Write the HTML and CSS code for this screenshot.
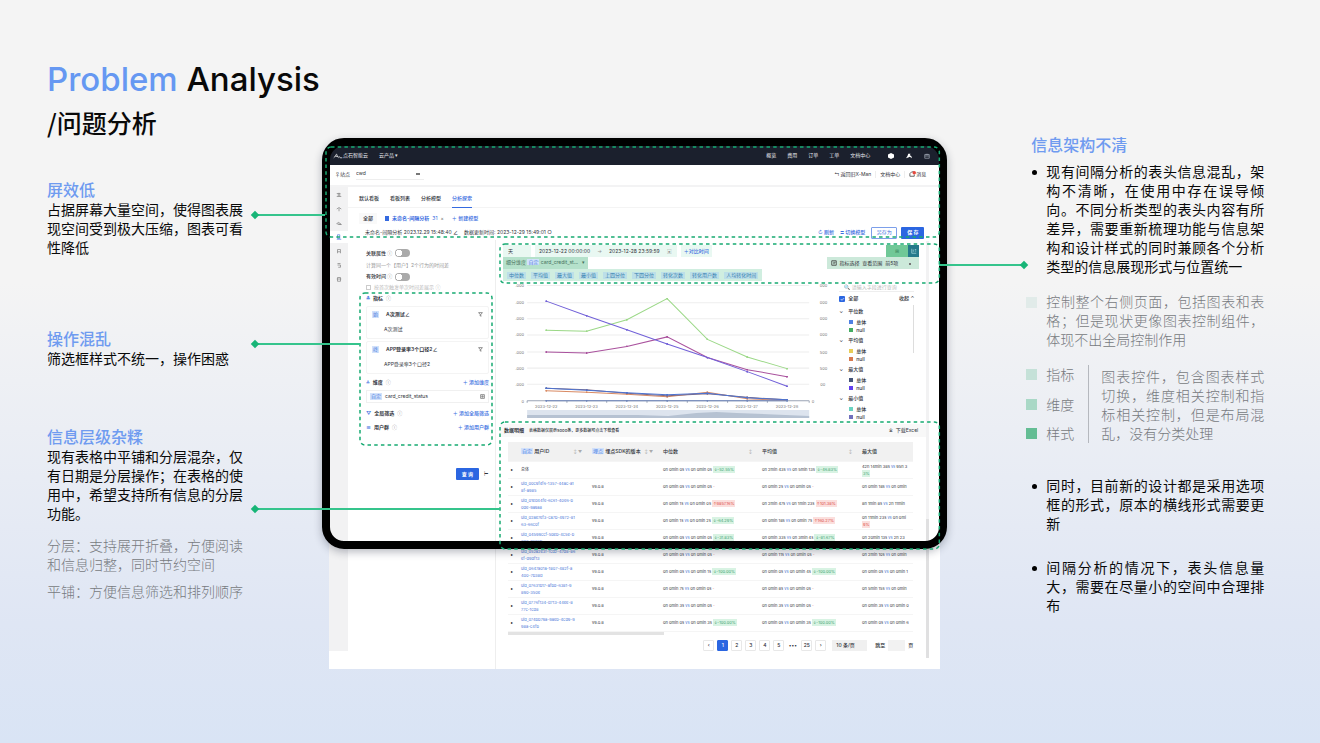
FILE: index.html
```html
<!DOCTYPE html>
<html lang="zh-CN">
<head>
<meta charset="utf-8">
<title>Problem Analysis / 问题分析</title>
<link rel="stylesheet" href="styles.css">
</head>
<body>
<main class="slide">
  <section class="notes notes-left">
    <h1 class="title"><span class="accent">Problem</span> Analysis</h1>
    <p class="subtitle">/问题分析</p>
    <article class="note note-first">
      <h2>屏效低</h2>
      <p>占据屏幕大量空间，使得图表展现空间受到极大压缩，图表可看性降低</p>
    </article>
    <article class="note note-second">
      <h2>操作混乱</h2>
      <p>筛选框样式不统一，操作困惑</p>
    </article>
    <article class="note note-third">
      <h2>信息层级杂糅</h2>
      <p>现有表格中平铺和分层混杂，仅有日期是分层操作；在表格的使用中，希望支持所有信息的分层功能。</p>
      <p class="muted">分层：支持展开折叠，方便阅读和信息归整，同时节约空间</p>
      <p class="muted">平铺：方便信息筛选和排列顺序</p>
    </article>
  </section>

  <section class="stage">
    <div class="screen">
      <header class="topbar">
        <svg class="logo" viewBox="0 0 14 8"><path d="M1 6.500C3 6 4 1 5 1.500S5 5 8 6.500M3.500 4.500h3M8 4l2 2.500h3" fill="none" stroke="#fff"/></svg>
        <span>点石智能云</span><span class="product">云产品 ▾</span>
        <nav class="topnav"><a href="#">概览</a><a href="#">费用</a><a href="#">订单</a><a href="#">工单</a><a href="#">文档中心</a></nav>
        <svg class="ico top-ico" viewBox="0 0 8 8"><path d="M4 0l4 2v4L4 8 0 6V2z" fill="#fff"/></svg>
        <svg class="ico top-ico" viewBox="0 0 8 8"><path d="M0 7l2-3 1-3h3l-1 2 2 1 1 3-3-2-2 1z" fill="#fff"/></svg>
        <svg class="ico top-ico" viewBox="0 0 8 8"><path d="M1 2h6v5H1zM1 4h6M3 1v2M5 1v2" fill="none" stroke="#9aa0ad"/></svg>
      </header>
      <div class="sitebar">
        <label for="site">♀站点</label>
        <select id="site" class="site-select"><option>cwd</option></select>
        <nav class="sitenav"><a href="#">↰ 返回旧X-Man</a><i></i><a href="#">文档中心</a><i></i><a href="#" class="message"><svg class="bell" viewBox="0 0 8 8"><path d="M1 6V3l2-2h3M1 6h5V4" fill="none" stroke="#555"/><circle cx="6" cy="2" r="2" fill="#e6483d"/></svg>消息</a></nav>
      </div>
      <div class="workspace">
        <aside class="rail">
          <svg viewBox="0 0 8 8"><path d="M1 2h5M2 4h4M1 6h6M4 1v5"/></svg>
          <svg viewBox="0 0 8 8"><path d="M1 4l3-2 3 2M4 3v4"/></svg>
          <svg viewBox="0 0 8 8"><path d="M1 5l2-2 2 1 2 2zM3 6h4"/></svg>
          <span class="rail-on"><svg viewBox="0 0 8 8"><path d="M2 1h3v5H2zM1 7h6"/></svg></span>
          <svg viewBox="0 0 8 8"><path d="M2 7V2h4v3H2M6 5v2"/></svg>
          <svg viewBox="0 0 8 8"><path d="M2 2h4M2 4h4v3H3"/></svg>
          <svg viewBox="0 0 8 8"><path d="M2 2h4v5H2zM1 4h6"/></svg>
        </aside>
        <div class="main">
          <nav class="tabs"><a href="#">默认看板</a><a href="#">看板列表</a><a href="#">分析模型</a><a href="#" class="on">分析探索</a></nav>
          <div class="models"><button class="all">全部</button><button class="current"><b class="square"></b><strong>未命名-间隔分析</strong> 31 <span>×</span></button><button class="link">＋ 新建模型</button></div>
          <div class="model-head">
            <span>未命名-间隔分析 2023.12.29 15:48:40 <b>∠</b></span><small>数据更新时间: 2023-12-29 15:49:01 ○</small>
            <div class="actions"><button class="link">↻ 刷新</button><button class="link">≒ 切换模型</button><button class="outline">另存为</button><button class="primary">保 存</button></div>
          </div>
          <div class="panes">
            <form class="filters">
              <div class="row r12"><label for="rel">关联属性 <span class="dim">ⓘ</span></label><input id="rel" class="toggle" type="checkbox"></div>
              <p class="row r12 dim">计算同一个【用户】2个行为的时间差</p>
              <div class="row r12"><label for="valid">有效时间 <span class="dim">ⓘ</span></label><input id="valid" class="toggle" type="checkbox"></div>
              <label class="row r12 disabled"><input class="mini-check" type="checkbox" checked disabled>按首次触发单次时间差展示 ⓘ</label>
              <div class="row r12"><b class="blue">≛</b><strong>指标</strong><span class="dim">ⓘ</span></div>
              <div class="metric">
                <div class="metric-row"><b class="tag">始</b><strong>A次测试∠</strong><svg class="funnel" viewBox="0 0 8 8"><path d="M1 1h6L4.500 4v3L3.500 6V4z"/></svg></div>
                <div class="metric-row sub">A次测试</div>
              </div>
              <div class="metric">
                <div class="metric-row"><b class="tag">终</b><strong>APP登录率3个口径2∠</strong><svg class="funnel" viewBox="0 0 8 8"><path d="M1 1h6L4.500 4v3L3.500 6V4z"/></svg></div>
                <div class="metric-row sub">APP登录率3个口径2</div>
              </div>
              <div class="row r16"><b class="blue">⁂</b><strong>维度</strong><span class="dim">ⓘ</span><button type="button" class="link push">＋ 添加维度</button></div>
              <div class="dimension"><b class="tag">自定</b>card_credit_status<svg class="funnel" viewBox="0 0 8 8"><path d="M1 1h6v6H1zM3 3h2v2H3z"/></svg></div>
              <div class="row r14 gap-top"><b class="blue">▽</b><strong>全局筛选</strong><span class="dim">ⓘ</span><button type="button" class="link push">＋ 添加全局筛选</button></div>
              <div class="row r14"><b class="blue">≡</b><strong>用户群</strong><span class="dim">ⓘ</span><button type="button" class="link push">＋ 添加用户群</button></div>
              <div class="query"><button type="button" class="primary">查 询</button><span>⊢</span></div>
            </form>

            <div class="results">
              <div class="result-body">
                <div class="controls">
                  <div class="time"><select class="unit" aria-label="单位"><option>天</option></select><div class="dates"><span>2023-12-22 00:00:00</span><i>→</i><span>2023-12-28 23:59:59</span><i>▣</i></div><button class="link">＋对比时间</button></div>
                  <div class="switch"><button>⊞</button><button class="on" aria-label="图表"><svg class="ico" viewBox="0 0 8 8"><path d="M1 1v6h6M3 2v3M5 2h2M5 4h2" fill="none" stroke="#9fd4da"/></svg></button></div>
                  <div class="split">细分维度 <b class="tag">自定</b> card_credit_st... <em>▾</em></div>
                  <div class="scope"><svg class="ico" viewBox="0 0 8 8"><path d="M1 1h6v6H1zM3 3h3M3 5h2" fill="none" stroke="#333"/></svg>指标选择&nbsp; 查看范围 <select aria-label="查看范围"><option>前5项</option></select></div>
                  <div class="chips"><b>中位数</b><b>平均值</b><b>最大值</b><b>最小值</b><b>上四分位</b><b>下四分位</b><b>转化次数</b><b>转化用户数</b><b>人均转化时间</b></div>
                </div>
                <div class="chart-row">
                  <svg class="chart" viewBox="0 0 320 137">
                    <path d="M19 3.500h280M19 20.500h280M19 36.500h280M19 52.500h280M19 69.500h280M19 85.500h280M19 101.500h280" stroke="#eee" fill="none"/>
                    <g class="axis">
                      <text x="16" y="5">.000</text><text x="16" y="22">.000</text><text x="16" y="38">.000</text><text x="16" y="54">.000</text><text x="16" y="71">.000</text><text x="16" y="87">.000</text><text x="16" y="103">.000</text><text x="16" y="120">0</text>
                      <text x="317" y="5">000</text><text x="317" y="22">000</text><text x="317" y="38">000</text><text x="317" y="54">000</text><text x="317" y="71">500</text><text x="317" y="87">500</text><text x="315" y="103">00</text><text x="304" y="120">0</text>
                    </g>
                    <path d="M19 118h280M19 118v2M58.500 118v2M98 118v2M138 118v2M178 118v2M218 118v2M257.500 118v2M299 118v2" stroke="#9aa4b5" fill="none"/>
                    <g class="axis dates-axis"><text x="38" y="125">2023-12-22</text><text x="78" y="125">2023-12-23</text><text x="118" y="125">2023-12-24</text><text x="158" y="125">2023-12-25</text><text x="198" y="125">2023-12-26</text><text x="237" y="125">2023-12-27</text><text x="277" y="125">2023-12-28</text></g>
                    <path d="M19 127h280v8H19z" fill="#dde4ee"/><path d="M19 132h110l30 1 28-3 20-1 20 1 72 3v2H19z" fill="#b6c2d2"/>
                    <g class="series">
                      <polyline points="38,48 78,49 118,37.500 158,16.500 198,57 237.500,74.500 277,86" stroke="#9bd887"/>
                      <polyline points="38,69.500 78,70.500 118,64 158,54.500 198,75 237.500,87 277,94" stroke="#a9519d"/>
                      <polyline points="38,19 78,33.500 118,47.500 158,61.500 198,75 237.500,89 277,103.500" stroke="#7160d8"/>
                      <polyline points="38,108 78,109.500 118,111.500 158,114 198,109.500 237.500,116 277,117.500" stroke="#d98b64"/>
                      <polyline points="38,105.500 78,107 118,110.500 158,113 198,111 237.500,114.500 277,117" stroke="#806a80"/>
                      <polyline points="38,105.500 78,107.500 118,110 158,112 198,110.500 237.500,115 277,117" stroke="#4d73d0"/>
                      <polyline points="38,118 78,118 118,118 158,118 198,118 237.500,118 277,118" stroke="#6f86bb"/>
                    </g>
                    <defs><marker id="dot" viewBox="0 0 4 4" refX="2" refY="2" markerWidth="2" markerHeight="2"><circle cx="2" cy="2" r="2" fill="context-stroke"/></marker></defs>
                  </svg>
                  <div class="legend">
                    <input class="search" type="text" aria-label="搜索" placeholder="🔍 请输入字段进行查询">
                    <div class="legend-all"><label><input type="checkbox" checked> 全部</label><span>收起 ⌃</span></div>
                    <div class="legend-scroll">
                      <p class="group">平位数</p><p class="item"><i class="c1"></i>总体</p><p class="item"><i class="c2"></i>null</p>
                      <p class="group">平均值</p><p class="item"><i class="c3"></i>总体</p><p class="item"><i class="c4"></i>null</p>
                      <p class="group">最大值</p><p class="item"><i class="c5"></i>总体</p><p class="item"><i class="c6"></i>null</p>
                      <p class="group">最小值</p><p class="item"><i class="c7"></i>总体</p><p class="item"><i class="c8"></i>null</p>
                    </div>
                  </div>
                </div>
                <div class="table-head"><strong>数据明细</strong><span>表格数据仅展示5000条，更多数据可点击下载查看</span><button class="download">⤓ &nbsp;下载Excel</button></div>
                <div class="table-wrap">
                  <table>
                    <colgroup><col class="w-arrow"><col class="w-id"><col class="w-ver"><col class="w-mid"><col class="w-avg"><col></colgroup>
                    <thead><tr><th></th><th><b class="tag">自定</b> 用户ID<i class="sort">↕ ▼</i></th><th><b class="tag">埋点</b> 埋点SDK的版本<i class="sort">↕ ▼</i></th><th>中位数<i class="sort">↕</i></th><th>平均值<i class="sort">↕</i></th><th>最大值</th></tr></thead>
                    <tbody>
                      <tr><td>▸</td><td>总体</td><td></td><td>0h 0min 0s <u>vs</u> 0h 0min 0s <ins>↓-52.55%</ins></td><td>0h 2min 43s <u>vs</u> 0h 5min 13s <ins>↓-46.83%</ins></td><td>42h 14min 38s <u>vs</u> 95h 3<br><ins>3%</ins></td></tr>
                      <tr><td>▸</td><td><a href="#">uid_00c9f4f6-1357-44ac-a1<br>8f-a985</a></td><td>v9.0.8</td><td>0h 0min 0s <u>vs</u> 0h 0min 0s <em>-</em></td><td>0h 0min 2s <u>vs</u> 0h 0min 0s <em>-</em></td><td>0h 0min 18s <u>vs</u> 0h 0min</td></tr>
                      <tr><td>▸</td><td><a href="#">uid_01ed44fe-6c61-40e6-b<br>0de-9a9a8</a></td><td>v9.0.8</td><td>0h 0min 1s <u>vs</u> 0h 0min 0s <del>↑9857.16%</del></td><td>0h 2min 47s <u>vs</u> 0h 1min 23s <del>↑101.38%</del></td><td>8h 1min 8s <u>vs</u> 2h 11min</td></tr>
                      <tr><td>▸</td><td><a href="#">uid_02ae7ef3-ca7b-4972-81<br>63-66c0f</a></td><td>v9.0.8</td><td>0h 0min 1s <u>vs</u> 0h 0min 2s <ins>↓-64.29%</ins></td><td>0h 0min 18s <u>vs</u> 0h 0min 7s <del>↑160.27%</del></td><td>0h 11min 23s <u>vs</u> 0h 0mi<br><del>9%</del></td></tr>
                      <tr><td>▸</td><td><a href="#">uid_04599ccf-5beb-4c5e-b<br>303-2c26b</a></td><td>v9.0.8</td><td>0h 0min 0s <u>vs</u> 0h 0min 0s <ins>↓-31.83%</ins></td><td>0h 0min 33s <u>vs</u> 0h 3min 4s <ins>↓-81.67%</ins></td><td>0h 20min 13s <u>vs</u> 2h 23</td></tr>
                      <tr><td>▸</td><td><a href="#">uid_052a2e3f-fcd2-47d8-86<br>ef-d9df13</a></td><td>v9.0.8</td><td>0h 0min 0s <u>vs</u> 0h 0min 0s <em>-</em></td><td>0h 0min 11s <u>vs</u> 0h 0min 0s <em>-</em></td><td>0h 2min 10s <u>vs</u> 0h 0min</td></tr>
                      <tr><td>▸</td><td><a href="#">uid_0647a01a-1807-482f-a<br>400-7b38d</a></td><td>v9.0.8</td><td>0h 0min 0s <u>vs</u> 0h 0min 1s <ins>↓-100.00%</ins></td><td>0h 0min 0s <u>vs</u> 0h 0min 4s <ins>↓-100.00%</ins></td><td>0h 0min 0s <u>vs</u> 0h 0min 1</td></tr>
                      <tr><td>▸</td><td><a href="#">uid_07631b17-afbd-6381-9<br>890-350e</a></td><td>v9.0.8</td><td>0h 0min 7s <u>vs</u> 0h 0min 0s <em>-</em></td><td>0h 0min 8s <u>vs</u> 0h 0min 0s <em>-</em></td><td>0h 5min 15s <u>vs</u> 0h 0min</td></tr>
                      <tr><td>▸</td><td><a href="#">uid_0776f134-d713-44ee-8<br>77c-1cd8</a></td><td>v9.0.8</td><td>0h 0min 3s <u>vs</u> 0h 0min 0s <em>-</em></td><td>0h 0min 3s <u>vs</u> 0h 0min 0s <em>-</em></td><td>0h 0min 3s <u>vs</u> 0h 0min 0</td></tr>
                      <tr><td>▸</td><td><a href="#">uid_074bb79a-9aeb-4cd9-9<br>98a-c4fb</a></td><td>v9.0.8</td><td>0h 0min 0s <u>vs</u> 0h 0min 3s <ins>↓-100.00%</ins></td><td>0h 0min 0s <u>vs</u> 0h 0min 3s <ins>↓-100.00%</ins></td><td>0h 0min 0s <u>vs</u> 0h 0min 6</td></tr>
                    </tbody>
                  </table>
                  <div class="hscroll"></div>
                </div>
                <nav class="pager"><button>‹</button><button class="on">1</button><button>2</button><button>3</button><button>4</button><button>5</button><span>•••</span><button>25</button><button>›</button><select aria-label="每页条数"><option>10 条/页</option></select><label for="jump">跳至</label><input id="jump" type="text"><span class="unit-page">页</span></nav>
              </div>
              <div class="vscroll"></div>
            </div>
          </div>
        </div>
      </div>
    </div>
    <div class="bezel"></div>
    <svg class="zone zone-top"><rect width="100%" height="100%" rx="5"/></svg>
    <svg class="zone zone-controls"><rect width="100%" height="100%" rx="5"/></svg>
    <svg class="zone zone-filters"><rect width="100%" height="100%" rx="5"/></svg>
    <svg class="zone zone-table"><rect width="100%" height="100%" rx="5"/></svg>
    <div class="pin pin-top"></div>
    <div class="pin pin-filters"></div>
    <div class="pin pin-table"></div>
    <div class="pin pin-right"></div>
  </section>

  <section class="notes notes-right">
    <h2>信息架构不清</h2>
    <ul><li>现有间隔分析的表头信息混乱，架构不清晰，在使用中存在误导倾向。不同分析类型的表头内容有所差异，需要重新梳理功能与信息架构和设计样式的同时兼顾各个分析类型的信息展现形式与位置统一</li></ul>
    <div class="keyed"><i class="swatch s1"></i><p>控制整个右侧页面，包括图表和表格；但是现状更像图表控制组件，体现不出全局控制作用</p></div>
    <div class="keys">
      <dl><dt class="swatch s2"></dt><dd>指标</dd><dt class="swatch s3"></dt><dd>维度</dd><dt class="swatch s4"></dt><dd>样式</dd></dl>
      <p>图表控件，包含图表样式切换，维度相关控制和指标相关控制，但是布局混乱，没有分类处理</p>
    </div>
    <ul class="extra"><li>同时，目前新的设计都是采用选项框的形式，原本的横线形式需要更新</li><li>间隔分析的情况下，表头信息量大，需要在尽量小的空间中合理排布</li></ul>
  </section>
</main>
</body>
</html>
```
FILE: styles.css
```css
* { box-sizing: border-box; }
body { margin: 0; font-family: "Noto Sans CJK SC", "Noto Sans", sans-serif; color: #090909; }
h1, h2, p, ul, dl, dd { margin: 0; padding: 0; }
a { color: inherit; text-decoration: none; }
button, input, select { font: inherit; color: inherit; margin: 0; padding: 0; border: 0; background: none; appearance: none; }
i, em { font-style: normal; }

.slide { min-height: 100vh; display: grid; grid-template-columns: 196px 1fr 238px; column-gap: 79px; padding: 0 57px 0 47px; background: linear-gradient(180deg, #f4f4f4 0%, #f4f4f4 38%, #dfe6f4 84%, #d9e4f5 100%); }

/* Notes */
.notes { font-size: 14px; line-height: 19px; }
.notes-left { padding-top: 59px; }
.title { font: 500 33px/40px Inter, sans-serif; white-space: nowrap; }
.accent { color: #6698f2; }
.notes h2 { font-size: 16px; line-height: 21px; font-weight: 500; color: #6f9bf0; }
.subtitle { font-size: 25px; line-height: 36px; font-weight: 500; margin-top: 5px; white-space: nowrap; }
.note-first { margin-top: 39px; }
.note-second { margin-top: 71px; }
.note-third { margin-top: 58px; }
.muted { color: #777a80; font-weight: 300; margin-top: 13px; }
.muted + .muted { margin-top: 8px; }
.notes-right { padding-top: 134px; }
.notes-right h2 { padding-left: 5px; }
.notes-right p, .notes-right li { text-align: justify; }
.notes-right ul { list-style: none; margin-top: 7px; }
.notes-right li { display: grid; grid-template-columns: 20px 1fr; }
.notes-right li::before { content: ""; width: 5px; height: 5px; border-radius: 50%; background: #000; margin: 8px 0 0 6px; }
.keyed, .keys { display: flex; color: #777a80; font-weight: 300; }
.keyed { margin-top: 16px; }
.swatch { width: 11px; height: 11px; flex: none; }
.keyed .swatch { margin: 5px 9px 0 0; }
.s1 { background: #e1ebe9; } .s2 { background: #c5e1d8; } .s3 { background: #a9d8c6; } .s4 { background: #64bd94; }
.keys { margin-top: 16px; }
.keys dl { width: 63px; display: grid; grid-template-columns: 11px 1fr; column-gap: 9px; align-items: center; align-content: space-between; border-right: 1px solid #b5b8be; }
.keys p { flex: 1; padding: 2px 0 0 12px; }
.notes-right .extra { margin-top: 33px; display: grid; row-gap: 25px; }

/* Device */
.stage { position: relative; padding: 145px 7px 74px; }
.bezel { position: absolute; top: 138px; left: 0; right: 0; height: 411px; border: 8px solid #000; border-radius: 22px; box-shadow: 0 3px 8px rgba(20, 25, 50, .3); }
.zone { position: absolute; overflow: visible; fill: none; stroke: #17aa72; stroke-width: 1.5; stroke-dasharray: 3.500 3.200; }
.zone-top { left: 4px; top: 147px; width: calc(100% - 12px); height: 90px; }
.zone-controls { left: 178px; top: 244px; width: calc(100% - 186px); height: 39px; }
.zone-filters { left: 38px; top: 293px; width: 132px; height: 152px; }
.zone-table { left: 178px; top: 422px; width: calc(100% - 186px); height: 127px; }
.pin { position: absolute; left: -67px; height: 2px; background: #35c48c; }
.pin::before { content: ""; position: absolute; left: -3px; top: -2px; width: 6px; height: 6px; background: #17b577; transform: rotate(45deg); }
.pin-top { top: 214px; width: 70px; }
.pin-filters { top: 343px; width: 105px; }
.pin-table { top: 508px; width: 245px; }
.pin-right { top: 264px; left: auto; right: -77px; width: 85px; }
.pin-right::before { left: auto; right: -3px; }

/* Screen */
.screen { height: 524px; overflow: hidden; background: #fff; font-family: Inter, "Noto Sans CJK SC", sans-serif; font-size: 5px; line-height: 7px; color: #30333a; white-space: nowrap; display: flex; flex-direction: column; }
.ico { width: 6px; height: 6px; display: block; }
.topbar { height: 20px; background: #1b202d; color: #e5e7ec; display: flex; align-items: center; padding: 1px 10px 0 4px; }
.logo { width: 10px; height: 6px; }
.product { margin-left: 11px; }
.topnav { margin-left: auto; display: flex; gap: 11px; margin-right: 18px; }
.top-ico + .top-ico { margin-left: 12px; }
.sitebar { height: 22px; display: flex; align-items: center; padding: 0 14px 2px 6px; border-bottom: 2px solid #f3f3f4; }
.site-select { width: 68px; height: 12px; margin-left: 6px; border-bottom: 1px solid #eee; background: linear-gradient(#777, #777) 60px 5px / 4px 2px no-repeat; }
.sitenav { margin-left: auto; display: flex; gap: 4px; }
.sitenav i { border-left: 1px solid #eee; }
.message { display: flex; }
.bell { width: 7px; height: 7px; }
.workspace { flex: 1; display: flex; min-height: 0; }
.rail { width: 19px; height: 464px; background: #f2f2f3; display: flex; flex-direction: column; align-items: center; gap: 8px; padding-top: 5px; flex: none; }
.rail svg { width: 6px; height: 6px; fill: none; stroke: #888; display: block; }
.rail-on { background: #fff; width: 100%; height: 12px; margin: -3px 0; display: grid; place-items: center; }
.rail-on svg { stroke: #5b83dd; }
.main { flex: 1; min-width: 0; display: flex; flex-direction: column; }
.tabs { height: 21px; display: flex; gap: 11px; padding: 8px 11px 0; border-bottom: 1px solid #f4f4f4; font-weight: 500; }
.tabs a { height: 13px; }
.tabs .on { color: #356ae0; border-bottom: 1px solid #356ae0; }
.models { height: 19px; display: flex; align-items: center; padding: 1px 11px 0; }
.all { background: #f9f9f9; padding: 2px 4px; margin-right: 8px; font-weight: 500; }
.current { color: #356ae0; display: flex; align-items: center; gap: 3px; }
.current span { color: #777; }
.square { width: 4px; height: 5px; background: #356ae0; }
.link { color: #3c70df; font-weight: 500; }
.models .link { margin-left: 8px; }
.model-head { height: 13px; display: flex; align-items: center; padding: 0 16px 2px 17px; gap: 6px; }
.model-head small { font-size: 5px; }
.actions { display: flex; gap: 6px; margin-left: auto; }
.primary { background: #2b66e1; color: #fff; width: 23px; height: 12px; border-radius: 1px; font-weight: 600; }
.outline { border: 1px solid #7c9fea; color: #3c70df; width: 26px; height: 12px; border-radius: 1px; }
.actions .outline { margin-right: -2px; }
.panes { flex: 1; display: flex; min-height: 0; }

.filters { width: 148px; flex: none; padding: 7px 6px 0 18px; border-right: 1px solid #eee; }
.row { display: flex; align-items: center; gap: 3px; }
.r12 { height: 12px; min-height: 0; }
.r12:nth-child(n+3) { height: 11px; }
.r14 { height: 14px; } .r16 { height: 16px; }
.gap-top { margin-top: 3px; }
.row label { font-weight: 500; }
.dim, .disabled { color: #999; }
.disabled { color: #bbb; }
.blue { color: #3c70df; }
.toggle { width: 15px; height: 8px; border-radius: 4px; background: radial-gradient(circle at 4px 4px, #fff 3px, #aaa 3px); }
.mini-check { width: 5px; height: 5px; border: 1px solid #ccc; }
.metric { border: 1px solid #f4f4f4; border-radius: 2px; height: 33px; padding: 0 5px; margin-top: 2px; }
.metric-row { height: 15px; display: flex; align-items: center; gap: 7px; }
.metric-row strong, .row strong { font-weight: 600; }
.sub { padding-left: 12px; }
.tag { font-weight: 400; background: #d2e2fb; color: #4e7ede; padding: 0 1px; }
.funnel { width: 5px; height: 5px; margin-left: auto; fill: none; stroke: #555; }
.push { margin-left: auto; }
.dimension { height: 13px; border: 1px solid #f0f0f0; display: flex; align-items: center; gap: 3px; padding: 0 3px; }
.query { margin: 34px 1px 0 0; display: flex; justify-content: flex-end; align-items: center; gap: 5px; }

.results { flex: 1; min-width: 0; display: flex; padding-top: 1px; }
.result-body { flex: 1; min-width: 0; padding-left: 4px; }
.vscroll { width: 3px; height: 417px; margin-right: 11px; background: linear-gradient(#e0e0e1, #e0e0e1) 0 278px / 3px 140px no-repeat #f2f2f3; }
.controls { height: 41px; padding: 4px 7px 0 3px; display: grid; grid-template-columns: auto auto; grid-template-rows: 12px 12px 12px; justify-content: space-between; }
.time { display: flex; gap: 4px; align-items: stretch; }
.unit { width: 28px; background: #e9f8f2; padding: 0 5px; }
.dates { background: #e9f8f2; display: flex; align-items: center; gap: 7px; padding: 0 5px 0 4px; }
.dates i { color: #999; }
.time .link { background: #e9f8f2; padding: 0 3px; }
.switch { justify-self: end; display: flex; background: #70c897; width: 33px; color: #3b875f; }
.switch button { flex: 1; } .switch .on { flex: none; width: 11px; display: grid; place-items: center; background: #267a8b; }
.split { background: #b5e1cb; padding: 2px 3px; justify-self: start; color: #46715d; }
.split em { padding-left: 3px; }
.scope { background: #cce9da; padding: 0 4px; justify-self: end; display: flex; align-items: center; gap: 3px; }
.scope select { width: 30px; height: 7px; background: linear-gradient(#777, #777) 24px 3px / 2px 2px no-repeat; }
.chips { grid-column: 1 / -1; justify-self: start; background: #d0eee0; display: flex; gap: 5px; align-items: center; padding: 0 4px; }
.chips b { font-weight: 400; color: #377eb0; background: #bcdfe8; padding: 0 2px; }
.chart-row { display: flex; height: 142px; padding-left: 8px; }
.chart { flex: 1; min-width: 0; height: 138px; }
.axis text { fill: #777; font-size: 4px; text-anchor: end; }
.dates-axis text { text-anchor: middle; }
.series { fill: none; stroke-width: 1; }
.series polyline { marker-start: url(#dot); marker-mid: url(#dot); marker-end: url(#dot); }
.legend { width: 75px; margin: 0 12px 0 9px; }
.search { display: block; width: 100%; height: 10px; border-bottom: 1px solid #eee; padding: 0 5px; }
.search::placeholder { color: #bbb; opacity: 1; }
.legend-all { height: 13px; display: flex; justify-content: space-between; align-items: center; font-weight: 500; }
.legend-all label { display: flex; align-items: center; gap: 3px; }
.legend-all input { width: 6px; height: 6px; background: #2b66e1; border-radius: 1px; display: grid; place-items: center; }
.legend-all input::after { content: "✓"; color: #fff; }
.legend-scroll { height: 116px; overflow: hidden; background: linear-gradient(#ddd, #ddd) right 0 / 1px 48px no-repeat; }
.group { height: 13px; line-height: 12px; font-weight: 500; }
.group::before { content: "⌄"; display: inline-block; width: 9px; }
.item { height: 8px; line-height: 8px; display: flex; align-items: center; gap: 3px; padding-left: 10px; font-weight: 500; }
.item i { width: 4px; height: 4px; }
.c1 { background: #4f80e3; } .c2 { background: #45ad62; } .c3 { background: #e8cd57; } .c4 { background: #d87a4f; } .c5 { background: #455478; } .c6 { background: #6240ee; } .c7 { background: #6bd3c0; } .c8 { background: #7170bd; }
.table-head { height: 13px; display: flex; align-items: center; gap: 5px; padding: 0 8px 0 4px; background: #f8f8f8; }
.table-head span { font-size: 4px; font-weight: 500; }
.download { margin-left: auto; }
.table-wrap { margin: 5px 13px 0 8px; overflow: hidden; }
table { width: 100%; table-layout: fixed; border-collapse: collapse; font-size: 4px; line-height: 7px; }
.w-arrow { width: 13px; } .w-id { width: 71px; } .w-ver { width: 71px; } .w-mid { width: 99px; } .w-avg { width: 100px; }
th, td { padding: 0; height: 17px; text-align: left; vertical-align: middle; border-bottom: 1px solid #f5f5f5; }
th { background: #f1f1f1; font-size: 5px; font-weight: 500; height: 19px; }
td:first-child { padding-left: 3px; color: #000; }
td a { color: #4b78d8; }
u { color: #4776d2; text-decoration: none; }
ins, del { text-decoration: none; display: inline-block; padding: 0 1px; }
ins { background: #d8f3e3; color: #43a474; }
del { background: #fbdfdd; color: #dc4b46; }
td em { color: #e57b78; }
.sort { float: right; color: #aaa; font-size: 4px; margin-right: 10px; }
.hscroll { width: 156px; height: 3px; background: #e3e3e3; }
.pager { display: flex; justify-content: flex-end; align-items: center; gap: 3px; margin: 5px 13px 0 0; height: 12px; font-weight: 500; }
.pager button { width: 11px; height: 11px; border: 1px solid #e8e8e8; border-radius: 1px; }
.pager .on { background: #2b66e1; color: #fff; border-color: #2b66e1; }
.pager span { width: 11px; text-align: center; }
.pager select { width: 35px; height: 11px; padding: 0 4px; margin: 0 5px 0 3px; background: #f0f0f0; }
.pager input { width: 17px; height: 11px; background: #f2f2f2; }
.pager .unit-page { width: 5px; }
```
